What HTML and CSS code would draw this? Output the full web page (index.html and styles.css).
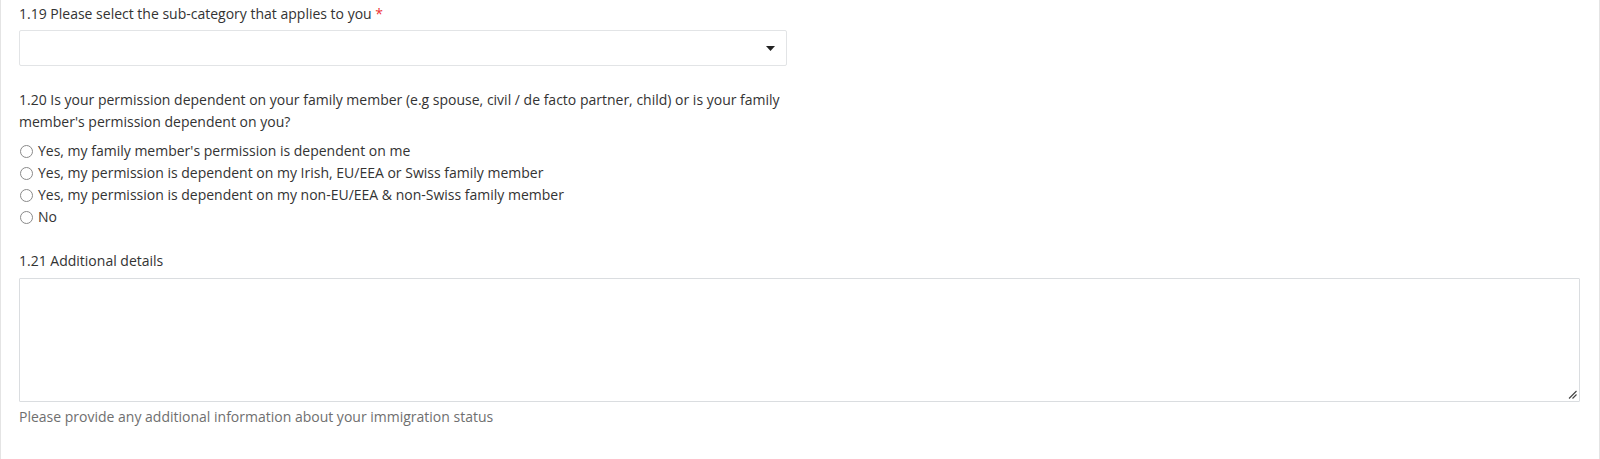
FILE: index.html
```html
<!DOCTYPE html>
<html lang="en">
<head>
<meta charset="utf-8">
<title>Form</title>
<link rel="stylesheet" href="styles.css">
</head>
<body>
<div class="page">
  <div class="field field-first">
    <label class="label">1.19 Please select the sub-category that applies to you <span class="req">*</span></label>
    <div class="select">
      <svg class="caret" width="9" height="5" viewBox="0 0 9 5"><path d="M0 0h9L4.5 5z" fill="#222"/></svg>
    </div>
  </div>

  <div class="field field-q">
    <div class="label question">1.20 Is your permission dependent on your family member (e.g spouse, civil / de facto partner, child) or is your family member's permission dependent on you?</div>
    <div class="radios">
      <label class="radio"><span class="dot"></span>Yes, my family member's permission is dependent on me</label>
      <label class="radio"><span class="dot"></span>Yes, my permission is dependent on my Irish, EU/EEA or Swiss family member</label>
      <label class="radio"><span class="dot"></span>Yes, my permission is dependent on my non-EU/EEA &amp; non-Swiss family member</label>
      <label class="radio"><span class="dot"></span>No</label>
    </div>
  </div>

  <div class="field field-ta">
    <label class="label">1.21 Additional details</label>
    <div class="textarea">
      <svg class="grip" width="9" height="9" viewBox="0 0 9 9"><path d="M8.5 1L1 8.5M8.5 4.5L4.5 8.5" stroke="#444" stroke-width="1.1"/></svg>
    </div>
    <div class="help">Please provide any additional information about your immigration status</div>
  </div>
</div>
</body>
</html>
```

FILE: styles.css
```css
html, body {
  margin: 0;
  padding: 0;
  background: #fff;
}
body {
  font-family: "Open Sans", "Noto Sans", sans-serif;
  font-size: 14px;
  color: #333;
}
.page {
  height: 459px;
  box-sizing: border-box;
  border-left: 1px solid #e4e4e4;
  border-right: 1px solid #e4e4e4;
  padding: 0 19px 0 18px;
  display: flex;
  flex-direction: column;
}
.field {
  display: flex;
  flex-direction: column;
}
.label {
  display: block;
  line-height: 20px;
  color: #333;
}
.req {
  color: #e33;
}
.field-first {
  margin-top: 4px;
  width: 768px;
}
.select {
  margin-top: 6px;
  height: 36px;
  box-sizing: border-box;
  border: 1px solid #e2e4e6;
  border-radius: 2px;
  display: flex;
  align-items: center;
  justify-content: flex-end;
  padding-right: 11px;
}
.field-q {
  margin-top: 23px;
  width: 768px;
}
.question {
  line-height: 22px;
}
.radios {
  margin-top: 7px;
  display: flex;
  flex-direction: column;
}
.radio {
  display: flex;
  align-items: center;
  height: 22px;
  line-height: 22px;
}
.dot {
  width: 11px;
  height: 11px;
  border: 1px solid #8a8a8a;
  border-radius: 50%;
  margin: 0 5px 0 1px;
  box-sizing: content-box;
  flex: none;
}
.field-ta {
  margin-top: 22px;
}
.field-ta .label {
  line-height: 22px;
}
.textarea {
  margin-top: 6px;
  height: 124px;
  box-sizing: border-box;
  border: 1px solid #dadde0;
  border-radius: 1px;
  position: relative;
}
.grip {
  position: absolute;
  right: 2px;
  bottom: 2px;
}
.help {
  margin-top: 5px;
  line-height: 20px;
  color: #6f6f6f;
}
```
